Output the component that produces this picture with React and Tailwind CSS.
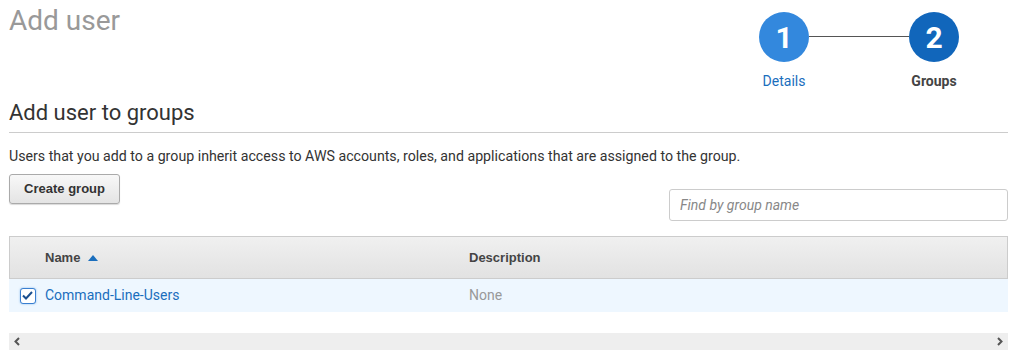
import { useState } from 'react';

export default function App() {
  const [checked, setChecked] = useState(true);

  return (
    <div className="w-[1027px] h-[364px] bg-white pl-[9px] pr-[19px] overflow-hidden" style={{ fontFamily: 'Roboto, "Liberation Sans", sans-serif' }}>
      {/* Header + stepper */}
      <div className="flex justify-between items-start">
        <h1 className="text-[28px] leading-[34px] text-[#999] mt-[4px]">Add user</h1>
        <div className="flex items-start mt-[12px] mr-[49px]">
          <div className="flex flex-col items-center w-[50px]">
            <div className="w-[50px] h-[50px] rounded-full bg-[#3388dd] text-white text-[30px] font-bold flex items-center justify-center">1</div>
            <span className="mt-[9px] text-[14px] leading-[20px] text-[#1a6ebd] whitespace-nowrap">Details</span>
          </div>
          <div className="w-[100px] h-px bg-[#555] mt-[24px]" />
          <div className="flex flex-col items-center w-[50px]">
            <div className="w-[50px] h-[50px] rounded-full bg-[#1166bb] text-white text-[30px] font-bold flex items-center justify-center">2</div>
            <span className="mt-[9px] text-[14px] leading-[20px] font-bold text-[#444] whitespace-nowrap">Groups</span>
          </div>
        </div>
      </div>

      {/* Section heading */}
      <h2 className="mt-[8px] text-[22px] leading-[28px] text-[#333] pb-[5px] border-b border-[#ccc]">Add user to groups</h2>
      <p className="mt-[13px] text-[14.2px] leading-[20px] text-[#333]">
        Users that you add to a group inherit access to AWS accounts, roles, and applications that are assigned to the group.
      </p>

      {/* Actions */}
      <div className="flex justify-between items-start mt-[8px]">
        <button className="h-[30px] w-[111px] rounded-[3px] border border-[#aaa] bg-gradient-to-b from-[#f8f8f8] to-[#e4e4e4] text-[13px] font-bold text-[#333] shadow-[0_1px_1px_rgba(0,0,0,0.15)]" style={{ fontFamily: '"Liberation Sans", Arial, sans-serif' }}>
          Create group
        </button>
        <input
          className="mt-[15px] w-[339px] h-[32px] rounded-[3px] border border-[#ccc] px-[10px] text-[14px] italic placeholder:text-[#888] outline-none"
          placeholder="Find by group name"
        />
      </div>

      {/* Table */}
      <div className="mt-[15px]">
        <div className="flex items-center h-[43px] border border-[#ccc] bg-gradient-to-b from-[#f0f0f0] to-[#e2e2e2] text-[13px] font-bold text-[#444]" style={{ fontFamily: '"Liberation Sans", Arial, sans-serif' }}>
          <div className="w-[459px] pl-[35px] flex items-center gap-[8px]">
            Name
            <svg width="10" height="6" viewBox="0 0 10 6"><path d="M0 6 L5 0 L10 6 Z" fill="#1a6ebd" /></svg>
          </div>
          <div>Description</div>
        </div>
        <div className="flex items-center h-[33px] bg-[#eef7ff] text-[14px]">
          <div className="w-[36px] flex justify-center pl-[1px]">
            <button
              onClick={() => setChecked(!checked)}
              className="w-[16px] h-[16px] rounded-[3px] border border-[#3a7fd0] bg-white flex items-center justify-center shadow-[0_0_2px_rgba(51,136,221,0.6)]"
            >
              {checked && (
                <svg width="11" height="9" viewBox="0 0 11 9"><path d="M1 4.5 L4 7.5 L10 1" stroke="#1a4f8f" strokeWidth="2" fill="none" /></svg>
              )}
            </button>
          </div>
          <a className="w-[424px] text-[#1a6ebd]">Command-Line-Users</a>
          <span className="text-[#999]">None</span>
        </div>
      </div>

      {/* Horizontal scrollbar */}
      <div className="mt-[21px] h-[17px] bg-[#eeeeee] flex items-center justify-between px-[4px]">
        <svg width="9" height="9" viewBox="0 0 9 9"><path d="M6 1 L2.5 4.5 L6 8" stroke="#555" strokeWidth="2" fill="none" /></svg>
        <svg width="9" height="9" viewBox="0 0 9 9"><path d="M3 1 L6.5 4.5 L3 8" stroke="#555" strokeWidth="2" fill="none" /></svg>
      </div>
    </div>
  );
}
